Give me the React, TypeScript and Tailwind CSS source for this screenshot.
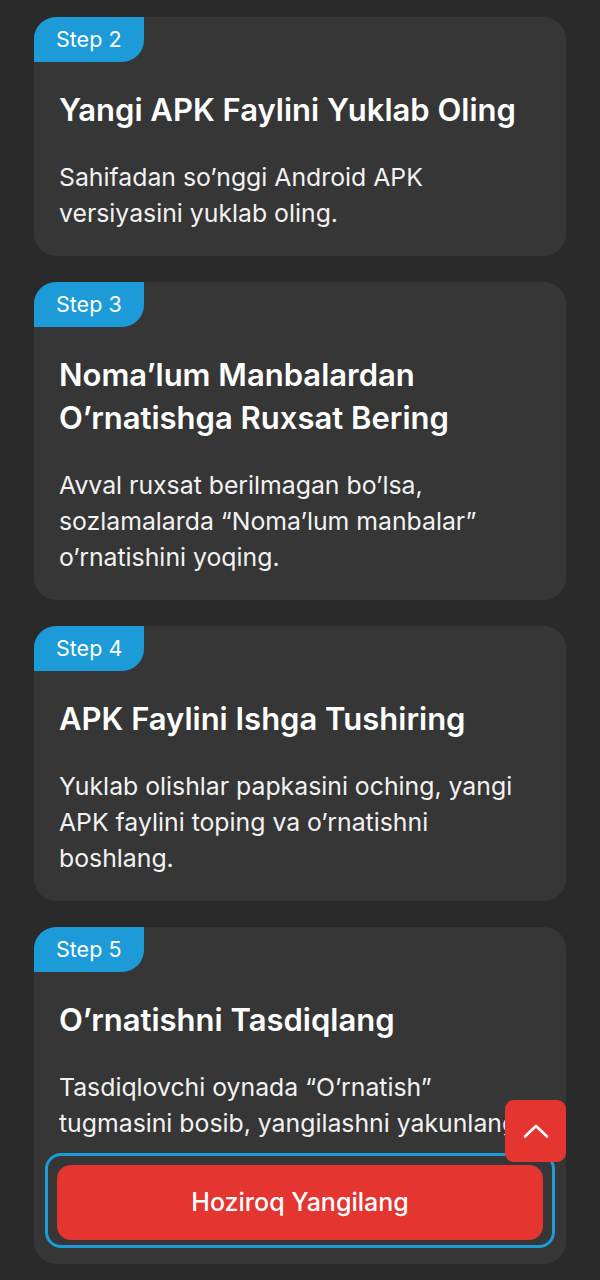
import React from "react";

type Step = {
  n: number;
  title: string[];
  body: string[];
};

const steps: Step[] = [
  {
    n: 2,
    title: ["Yangi APK Faylini Yuklab Oling"],
    body: ["Sahifadan so’nggi Android APK", "versiyasini yuklab oling."],
  },
  {
    n: 3,
    title: ["Noma’lum Manbalardan", "O’rnatishga Ruxsat Bering"],
    body: [
      "Avval ruxsat berilmagan bo’lsa,",
      "sozlamalarda “Noma’lum manbalar”",
      "o’rnatishini yoqing.",
    ],
  },
  {
    n: 4,
    title: ["APK Faylini Ishga Tushiring"],
    body: [
      "Yuklab olishlar papkasini oching, yangi",
      "APK faylini toping va o’rnatishni",
      "boshlang.",
    ],
  },
  {
    n: 5,
    title: ["O’rnatishni Tasdiqlang"],
    body: [
      "Tasdiqlovchi oynada “O’rnatish”",
      "tugmasini bosib, yangilashni yakunlang.",
    ],
  },
];

function StepCard({ step, last }: { step: Step; last?: boolean }) {
  return (
    <div className="overflow-hidden rounded-[22px] bg-[#363636]">
      <div className="flex h-[45px] w-[110px] items-center rounded-br-[22px] bg-[#1c9bd8] pl-[22px] text-[21.5px] text-white">
        Step {step.n}
      </div>
      <div className={last ? "px-[25px]" : "px-[25px] pb-[25px]"}>
        <h2 className="mt-[26px] text-[31px] font-semibold leading-[43px] text-white">
          {step.title.map((t) => (
            <div key={t}>{t}</div>
          ))}
        </h2>
        <div className="mt-[28px] text-[24.8px] leading-[36px] text-[#f2f2f2]">
          {step.body.map((l) => (
            <p key={l} className="whitespace-nowrap">
              {l}
            </p>
          ))}
        </div>
      </div>
      {last && (
        <div className="mx-[11px] mb-[16px] mt-[12px] rounded-[16px] border-[3px] border-[#1c9bd8] px-[9px] pt-[9px] pb-[5px]">
          <button className="flex h-[75px] w-full items-center justify-center rounded-[14px] bg-[#e53530] text-[25px] font-medium text-white">
            Hoziroq Yangilang
          </button>
        </div>
      )}
    </div>
  );
}

export default function App() {
  return (
    <div
      className="relative min-h-[1280px] bg-[#2a2a2a] px-[34px] pt-[17px] pb-[20px]"
      style={{ fontFamily: "Inter, 'Noto Sans', sans-serif" }}
    >
      <div className="flex flex-col gap-[26px]">
        {steps.map((s, i) => (
          <StepCard key={s.n} step={s} last={i === steps.length - 1} />
        ))}
      </div>
      <button className="absolute left-[505px] top-[1100px] flex h-[62px] w-[61px] items-center justify-center rounded-[9px] bg-[#e53530]">
        <svg width="26" height="16" viewBox="0 0 26 16" fill="none">
          <path
            d="M2 13.5 L13 3 L24 13.5"
            stroke="white"
            strokeWidth="2.6"
            strokeLinecap="round"
            strokeLinejoin="round"
          />
        </svg>
      </button>
    </div>
  );
}
